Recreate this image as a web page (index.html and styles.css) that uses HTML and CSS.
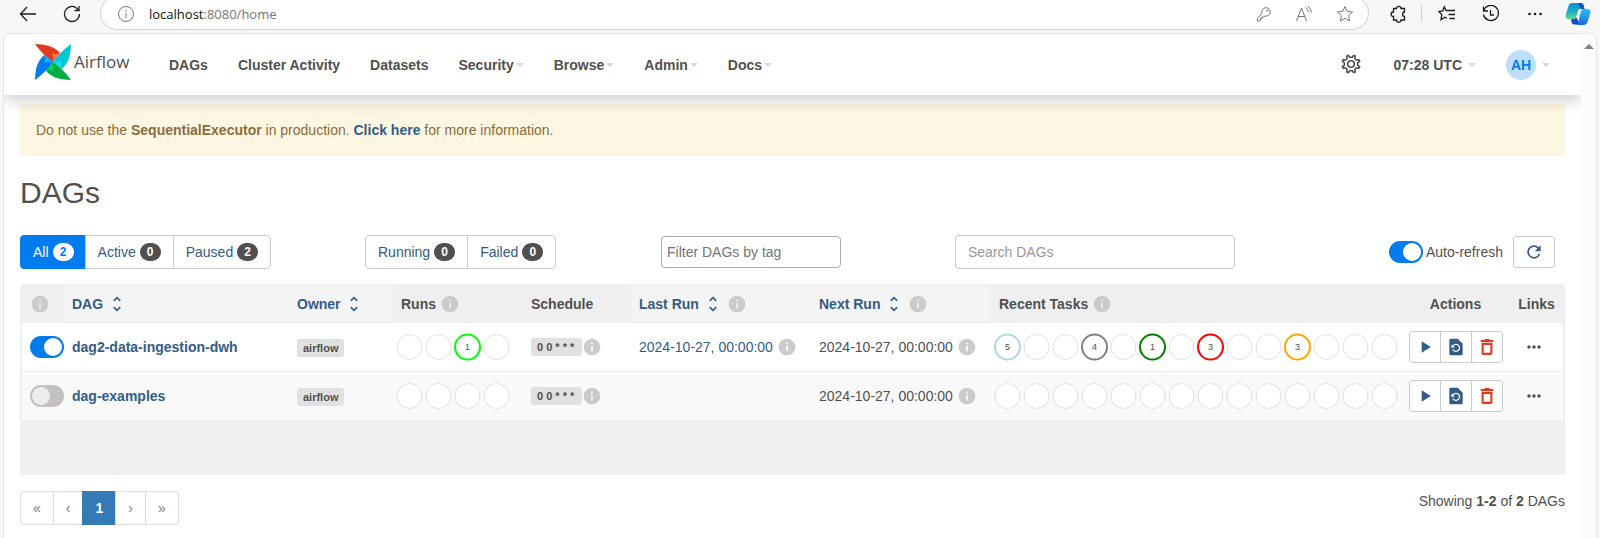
FILE: index.html
```html
<!DOCTYPE html>
<html lang="en">
<head>
<meta charset="utf-8">
<title>DAGs - Airflow</title>
<link rel="stylesheet" href="styles.css">
</head>
<body>
<svg class="defs" aria-hidden="true">
  <symbol id="i-info" viewBox="0 0 24 24"><path d="M12 2C6.48 2 2 6.48 2 12s4.48 10 10 10 10-4.48 10-10S17.52 2 12 2zm1 15h-2v-6h2v6zm0-8h-2V7h2v2z"/></symbol>
  <symbol id="i-sort" viewBox="0 0 24 24"><path d="M12 5.83L15.17 9l1.41-1.41L12 3 7.41 7.59 8.83 9 12 5.83zm0 12.34L8.83 15l-1.41 1.41L12 21l4.59-4.59L15.17 15 12 18.17z"/></symbol>
  <symbol id="i-play" viewBox="0 0 24 24"><path d="M8 5v14l11-7z"/></symbol>
  <symbol id="i-restore" viewBox="0 0 24 24"><path d="M14 2H6c-1.1 0-1.99.9-1.99 2L4 20c0 1.1.89 2 1.99 2H18c1.1 0 2-.9 2-2V8l-6-6zm-2 16c-2.05 0-3.81-1.24-4.58-3h1.71c.63.9 1.68 1.5 2.87 1.5 1.93 0 3.5-1.57 3.5-3.5S13.93 9.5 12 9.5c-1.35 0-2.52.78-3.1 1.9l1.6 1.6h-4V9l1.3 1.3C8.69 8.92 10.23 8 12 8c2.76 0 5 2.24 5 5s-2.24 5-5 5z"/></symbol>
  <symbol id="i-trash" viewBox="0 0 24 24"><path d="M5.500 19.500c0 1.100.9 2 2 2h9c1.100 0 2-.9 2-2V7h-13v12.500zM8 9.500h8V19H8V9.500zm7.500-6l-1-1h-5l-1 1H4.500V6h15V3.500h-4z"/></symbol>
  <symbol id="i-more" viewBox="0 0 24 24"><path d="M6 10c-1.1 0-2 .9-2 2s.9 2 2 2 2-.9 2-2-.9-2-2-2zm12 0c-1.1 0-2 .9-2 2s.9 2 2 2 2-.9 2-2-.9-2-2-2zm-6 0c-1.1 0-2 .9-2 2s.9 2 2 2 2-.9 2-2-.9-2-2-2z"/></symbol>
  <symbol id="i-refresh" viewBox="0 0 24 24"><path d="M17.65 6.35C16.2 4.9 14.21 4 12 4c-4.42 0-7.99 3.58-7.99 8s3.57 8 7.99 8c3.73 0 6.84-2.55 7.73-6h-2.08c-.82 2.33-3.04 4-5.65 4-3.31 0-6-2.69-6-6s2.69-6 6-6c1.66 0 3.14.69 4.22 1.78L13 11h7V4l-2.35 2.35z"/></symbol>
  <symbol id="blade" viewBox="0 0 36 36"><path d="M0 0C10 .5 17 1 25 9L18 18C11 13 7 9 0 0z"/></symbol>
  <symbol id="fold" viewBox="0 0 36 36"><path d="M17.500 8.500L20 10.500 25 9 18 18z"/></symbol>
</svg>

<div class="toolbar">
  <button class="tool back" aria-label="Back"><svg width="18" height="18" viewBox="0 0 18 18"><path d="M17 9H1.500M8 2L1.500 9 8 16"/></svg></button>
  <button class="tool reload" aria-label="Reload"><svg width="18" height="18" viewBox="0 0 18 18"><path d="M16.500 9A7.500 7.500 0 1 1 14 3.400L16 5.500M16 1v4.500h-4.500"/></svg></button>
  <div class="address">
    <svg width="18" height="18" viewBox="0 0 18 18"><circle cx="9" cy="9" r="7.500"/><path d="M9 8v5M9 5v1.500"/></svg>
    <span class="url"><b>localhost</b>:8080/home</span>
    <div class="address-tools">
      <svg width="16" height="16" viewBox="0 0 16 16"><path d="M6 7.200A4.200 4.200 0 1 1 9 10L7.500 11H6v1.600H4.500V14L3.800 15H1.500v-2.500z"/><circle cx="11.300" cy="4.700" r=".6"/></svg>
      <svg width="18" height="18" viewBox="0 0 18 18"><path d="M1.500 16L6.500 3l5 13M3.200 11.500h6.600M10.500 2.500q2.500 1.500 2.800 4.500M12.500 1q3.500 2 4 6.500"/></svg>
      <svg width="18" height="18" viewBox="0 0 18 18"><path d="M9 1.500l2.200 4.900 5.300.6-3.900 3.600 1 5.400L9 13.300 4.400 16l1-5.400L1.500 7l5.300-.6z"/></svg>
    </div>
  </div>
  <div class="browser-tools">
    <button class="tool" aria-label="Extensions"><svg width="18" height="18" viewBox="0 0 18 18"><path d="M4.500 3.500H7.500C7.500.6 12 .6 12 3.500H15.500V7C13 7 13 11.500 15.500 11.500V15H12C12 17.900 7.500 17.900 7.500 15H4.500V11.500C1.200 11.500 1.200 7 4.500 7z"/></svg></button>
    <span class="divider"></span>
    <button class="tool" aria-label="Favorites"><svg width="18" height="18" viewBox="0 0 18 18"><path d="M17 5.500h-5.500L8 5.500 6.300 1.800 4.700 5.800.8 6.500l3 3.200-.8 5 3.800-2.500 2 1M10.500 9.500H17M11.500 13.500H17"/></svg></button>
    <button class="tool" aria-label="History"><svg width="18" height="18" viewBox="0 0 18 18"><path d="M1.500 6A7.600 7.600 0 1 1 1.400 9.500M1.500 1.500V6H6M8.500 5v5H12"/></svg></button>
    <button class="tool" aria-label="More"><svg class="solid" width="18" height="18" viewBox="0 0 18 18"><circle cx="3.500" cy="9" r="1.300"/><circle cx="9" cy="9" r="1.300"/><circle cx="14.500" cy="9" r="1.300"/></svg></button>
    <button class="tool copilot" aria-label="Copilot"><svg width="26" height="24" viewBox="0 0 26 24">
      <defs>
        <linearGradient id="ga" x1="0" y1="0" x2="0" y2="1"><stop offset="0" stop-color="#0a8fd0"/><stop offset=".5" stop-color="#19a9c9"/><stop offset="1" stop-color="#5ddb8d"/></linearGradient>
        <linearGradient id="gb" x1="0" y1="0" x2="0" y2="1"><stop offset="0" stop-color="#2bc4f5"/><stop offset="1" stop-color="#1668e0"/></linearGradient>
      </defs>
      <path fill="url(#ga)" d="M7 1h9q2 0 2.500 2l1 4h-4q-2 0-2.500 2l-2 6q-.7 2-2.500 2H4Q-.5 17 1 12L3.500 4Q4.500 1 7 1z"/>
      <path fill="#1547c8" d="M6 17h3q1.500 0 2-2l4 7.500H9q-2 0-2.500-2.500z"/>
      <path fill="url(#gb)" d="M18 7h4q4.500 0 3 5l-2.500 8q-1 3-4 3h-7.500q1.500 0 2-2l3-12q.5-2 2-2z"/>
      <path fill="#0b57b5" d="M13 1h3q2 0 2.500 2l1 4h-3q-1.500 0-2-2z"/>
    </svg></button>
  </div>
</div>

<div class="window">
  <div class="page">
    <nav class="navbar">
      <a class="brand" href="#">
        <svg width="36" height="36" viewBox="0 0 36 36">
          <g fill="#e43921"><use href="#blade"/></g><g fill="#ff7557"><use href="#fold"/></g>
          <g transform="rotate(90 18 18)"><use href="#blade" fill="#00c7d4"/><use href="#fold" fill="#11e1ee"/></g>
          <g transform="rotate(180 18 18)"><use href="#blade" fill="#00ad46"/><use href="#fold" fill="#04d659"/></g>
          <g transform="rotate(270 18 18)"><use href="#blade" fill="#017cee"/><use href="#fold" fill="#0cb6ff"/></g>
        </svg>
        <span>Airflow</span>
      </a>
      <div class="menu">
        <a href="#">DAGs</a>
        <a href="#">Cluster Activity</a>
        <a href="#">Datasets</a>
        <a class="drop" href="#">Security</a>
        <a class="drop" href="#">Browse</a>
        <a class="drop" href="#">Admin</a>
        <a class="drop" href="#">Docs</a>
      </div>
      <div class="account">
        <a class="settings" href="#" aria-label="Settings"><svg class="gear" width="20" height="20" viewBox="0 0 20 20"><path d="M16.700 11.300L18.600 12.600 17.900 14.300 15.600 13.800 13.800 15.600 14.300 17.900 12.600 18.600 11.300 16.700H8.700L7.400 18.600 5.700 17.900 6.200 15.600 4.400 13.800 2.100 14.300 1.400 12.600 3.300 11.300V8.700L1.400 7.400 2.100 5.700 4.400 6.200 6.200 4.400 5.700 2.100 7.400 1.400 8.700 3.300H11.300L12.600 1.400 14.300 2.100 13.800 4.400 15.600 6.200 17.900 5.700 18.600 7.400 16.700 8.700z"/><circle cx="10" cy="10" r="3.300"/></svg></a>
        <a class="drop wide" href="#">07:28 UTC</a>
        <a class="drop wide" href="#"><span class="avatar">AH</span></a>
      </div>
    </nav>

    <main class="content">
      <div class="alert">Do not use the <b>SequentialExecutor</b> in production. <a href="#">Click here</a> for more information.</div>
      <h2>DAGs</h2>

      <div class="filters">
        <div class="group">
          <a class="btn active" href="#">All <span class="badge">2</span></a>
          <a class="btn" href="#">Active <span class="badge">0</span></a>
          <a class="btn" href="#">Paused <span class="badge">2</span></a>
        </div>
        <div class="group">
          <a class="btn" href="#">Running <span class="badge">0</span></a>
          <a class="btn" href="#">Failed <span class="badge">0</span></a>
        </div>
        <div><input class="tag-filter" type="text" placeholder="Filter DAGs by tag" aria-label="Filter DAGs by tag"></div>
        <div class="last">
          <input class="search" type="text" placeholder="Search DAGs" aria-label="Search DAGs">
          <div class="refresh">
            <label><input class="switch" type="checkbox" checked>Auto-refresh</label>
            <button class="reload-btn" aria-label="Refresh"><svg class="icon"><use href="#i-refresh"/></svg></button>
          </div>
        </div>
      </div>

      <div class="table-wrap">
        <table>
          <colgroup><col class="c-toggle"><col><col class="c-owner"><col class="c-runs"><col class="c-sched"><col class="c-date"><col class="c-date"><col class="c-tasks"><col class="c-actions"><col class="c-links"></colgroup>
          <thead>
            <tr>
              <th><svg class="icon info"><use href="#i-info"/></svg></th>
              <th class="sortable"><a href="#">DAG <svg class="icon"><use href="#i-sort"/></svg></a></th>
              <th class="sortable"><a href="#">Owner <svg class="icon"><use href="#i-sort"/></svg></a></th>
              <th>Runs <svg class="icon info"><use href="#i-info"/></svg></th>
              <th>Schedule</th>
              <th class="sortable"><a href="#">Last Run <svg class="icon"><use href="#i-sort"/></svg></a> <svg class="icon info"><use href="#i-info"/></svg></th>
              <th class="sortable"><a href="#">Next Run <svg class="icon"><use href="#i-sort"/></svg></a> <svg class="icon info"><use href="#i-info"/></svg></th>
              <th>Recent Tasks <svg class="icon info"><use href="#i-info"/></svg></th>
              <th class="center">Actions</th>
              <th class="center">Links</th>
            </tr>
          </thead>
          <tbody>
            <tr>
              <td><input class="switch" type="checkbox" checked aria-label="Unpause dag2-data-ingestion-dwh"></td>
              <td><a class="dag" href="#">dag2-data-ingestion-dwh</a></td>
              <td><a class="label" href="#">airflow</a></td>
              <td class="states"><svg width="114" height="28"><circle cx="13.500" cy="14" r="12.500"/><circle cx="42.500" cy="14" r="12.500"/><circle class="on" stroke="lime" cx="71.500" cy="14" r="12.500"/><circle cx="100.500" cy="14" r="12.500"/><text x="71.500" y="17">1</text></svg></td>
              <td><div class="inline"><a class="label cron" href="#">0 0 * * *</a><svg class="icon info"><use href="#i-info"/></svg></div></td>
              <td><div class="inline date"><a href="#">2024-10-27, 00:00:00</a><svg class="icon info"><use href="#i-info"/></svg></div></td>
              <td><div class="inline date"><span>2024-10-27, 00:00:00</span><svg class="icon info"><use href="#i-info"/></svg></div></td>
              <td class="states"><svg width="404" height="28"><circle class="on" stroke="lightblue" cx="13.500" cy="14" r="12.500"/><circle cx="42.500" cy="14" r="12.500"/><circle cx="71.500" cy="14" r="12.500"/><circle class="on" stroke="gray" cx="100.500" cy="14" r="12.500"/><circle cx="129.500" cy="14" r="12.500"/><circle class="on" stroke="green" cx="158.500" cy="14" r="12.500"/><circle cx="187.500" cy="14" r="12.500"/><circle class="on" stroke="red" cx="216.500" cy="14" r="12.500"/><circle cx="245.500" cy="14" r="12.500"/><circle cx="274.500" cy="14" r="12.500"/><circle class="on" stroke="orange" cx="303.500" cy="14" r="12.500"/><circle cx="332.500" cy="14" r="12.500"/><circle cx="361.500" cy="14" r="12.500"/><circle cx="390.500" cy="14" r="12.500"/><text x="13.500" y="17">5</text><text x="100.500" y="17">4</text><text x="158.500" y="17">1</text><text x="216.500" y="17">3</text><text x="303.500" y="17">3</text></svg></td>
              <td><div class="actions"><button aria-label="Trigger DAG"><svg class="icon"><use href="#i-play"/></svg></button><button aria-label="Reparse DAG"><svg class="icon"><use href="#i-restore"/></svg></button><button class="danger" aria-label="Delete DAG"><svg class="icon"><use href="#i-trash"/></svg></button></div></td>
              <td class="more"><a href="#" aria-label="Links"><svg class="icon"><use href="#i-more"/></svg></a></td>
            </tr>
            <tr>
              <td><input class="switch" type="checkbox" aria-label="Unpause dag-examples"></td>
              <td><a class="dag" href="#">dag-examples</a></td>
              <td><a class="label" href="#">airflow</a></td>
              <td class="states"><svg width="114" height="28"><circle cx="13.500" cy="14" r="12.500"/><circle cx="42.500" cy="14" r="12.500"/><circle cx="71.500" cy="14" r="12.500"/><circle cx="100.500" cy="14" r="12.500"/></svg></td>
              <td><div class="inline"><a class="label cron" href="#">0 0 * * *</a><svg class="icon info"><use href="#i-info"/></svg></div></td>
              <td></td>
              <td><div class="inline date"><span>2024-10-27, 00:00:00</span><svg class="icon info"><use href="#i-info"/></svg></div></td>
              <td class="states"><svg width="404" height="28"><circle cx="13.500" cy="14" r="12.500"/><circle cx="42.500" cy="14" r="12.500"/><circle cx="71.500" cy="14" r="12.500"/><circle cx="100.500" cy="14" r="12.500"/><circle cx="129.500" cy="14" r="12.500"/><circle cx="158.500" cy="14" r="12.500"/><circle cx="187.500" cy="14" r="12.500"/><circle cx="216.500" cy="14" r="12.500"/><circle cx="245.500" cy="14" r="12.500"/><circle cx="274.500" cy="14" r="12.500"/><circle cx="303.500" cy="14" r="12.500"/><circle cx="332.500" cy="14" r="12.500"/><circle cx="361.500" cy="14" r="12.500"/><circle cx="390.500" cy="14" r="12.500"/></svg></td>
              <td><div class="actions"><button aria-label="Trigger DAG"><svg class="icon"><use href="#i-play"/></svg></button><button aria-label="Reparse DAG"><svg class="icon"><use href="#i-restore"/></svg></button><button class="danger" aria-label="Delete DAG"><svg class="icon"><use href="#i-trash"/></svg></button></div></td>
              <td class="more"><a href="#" aria-label="Links"><svg class="icon"><use href="#i-more"/></svg></a></td>
            </tr>
          </tbody>
        </table>
      </div>

      <div class="footer">
        <div class="pages">
          <a href="#">«</a><a href="#">‹</a><a class="current" href="#">1</a><a href="#">›</a><a href="#">»</a>
        </div>
        <div>Showing <b>1-2</b> of <b>2</b> DAGs</div>
      </div>
    </main>
  </div>
  <div class="scrollbar"><span></span></div>
</div>
</body>
</html>
```
FILE: styles.css
```css
* { box-sizing: border-box; }
html, body { height: 100%; }
body {
  margin: 0;
  display: flex;
  flex-direction: column;
  overflow: hidden;
  background: #f7f7f7;
  color: #51504f;
  font: 14px/20px "Liberation Sans", Arial, sans-serif;
}
a { color: #335c85; text-decoration: none; }
button { font: inherit; padding: 0; cursor: pointer; }
svg { display: block; flex: none; }
.defs { position: absolute; width: 0; height: 0; }
.icon { width: 20px; height: 20px; fill: currentColor; }
.info { color: #cbcbcb; }

/* browser toolbar */
.toolbar {
  flex: none;
  display: flex;
  align-items: flex-start;
  height: 34px;
  padding: 0 9px 0 19px;
}
.toolbar svg { fill: none; stroke: #1b1b1b; stroke-width: 1.3; }
.toolbar svg.solid, .toolbar .copilot svg { fill: #1b1b1b; stroke: none; }
.tool { display: block; border: 0; background: none; padding-top: 5px; }
.reload { margin-left: 26px; }
.address {
  flex: 1;
  display: flex;
  align-items: center;
  height: 34px;
  margin: -4px 20px 0 19px;
  padding: 2px 14px 0 16px;
  border: 1px solid #cfd1cf;
  border-radius: 17px;
  background: #fff;
}
.address svg { stroke: #757575; stroke-width: 1; }
.url {
  margin-left: 14px;
  color: #767676;
  font: 13px/20px "Open Sans", "Noto Sans", sans-serif;
}
.url b { color: #111; font-weight: 400; }
.address-tools { display: flex; align-items: center; gap: 23px; margin-left: auto; }
.browser-tools { display: flex; align-items: flex-start; }
.browser-tools .tool + .tool { margin-left: 26px; }
.divider { width: 1px; height: 16px; margin: 6px 16px 0 14px; background: #cfcfcf; }
.browser-tools .copilot { padding-top: 2px; }
.browser-tools .tool + .copilot { margin-left: 21px; }

/* page frame */
.window {
  flex: 1;
  display: flex;
  min-height: 0;
  margin: 0 4px;
  overflow: hidden;
  background: #fff;
  border-radius: 8px 8px 0 0;
  box-shadow: 0 0 2px #bbb;
}
.page { flex: 1; min-width: 0; overflow: hidden; }
.scrollbar {
  width: 15px;
  background: #fcfcfc;
  padding-top: 10px;
}
.scrollbar span {
  display: block;
  width: 10px;
  margin: 0 auto;
  border: 5px solid transparent;
  border-top: 0;
  border-bottom-color: #848484;
}

/* navigation */
.navbar {
  position: relative;
  display: flex;
  align-items: center;
  height: 61px;
  padding: 0 31px;
  background: #fff;
  box-shadow: 0 5px 15px rgba(0, 0, 0, .2);
}
.navbar a { color: #51504f; font-weight: 700; }
.navbar .brand {
  display: flex;
  align-items: center;
  gap: 3px;
  width: 134px;
  padding-bottom: 5px;
  font: 17px/24px "Open Sans", "Noto Sans", sans-serif;
}
.menu { display: flex; gap: 30px; }
.drop { display: flex; align-items: center; gap: 2px; }
.drop::after {
  content: "";
  border: 4px solid transparent;
  border-top-color: #e2d2e4;
  border-bottom: 0;
}
.drop.wide { gap: 6px; }
.account { display: flex; align-items: center; gap: 30px; margin-left: auto; }
.settings { margin-right: 3px; padding-bottom: 2px; }
.gear { fill: none; stroke: #51504f; stroke-width: 1.6; }
.avatar {
  width: 30px;
  height: 30px;
  border-radius: 50%;
  background: #bfdefb;
  color: #017cee;
  line-height: 30px;
  text-align: center;
}

/* content */
.content { padding: 9px 16px 12px; }
.alert {
  padding: 16px;
  border-radius: 4px;
  background: #fdf6e3;
  color: #8a6d3b;
}
.alert a { font-weight: 700; }
h2 { margin: 19px 0 24px; font-size: 30px; line-height: 36px; font-weight: 400; }
.filters {
  display: grid;
  grid-template-columns: 345fr 296fr 294fr 610fr;
  align-items: center;
}
.group { display: flex; }
.btn {
  display: flex;
  align-items: center;
  gap: 4px;
  height: 34px;
  padding: 0 12px;
  border: 1px solid #ccc;
  margin-left: -1px;
  background: #fff;
}
.btn:first-child { margin-left: 0; border-radius: 4px 0 0 4px; }
.btn:last-child { border-radius: 0 4px 4px 0; }
.badge {
  width: 21px;
  border-radius: 9px;
  background: #51504f;
  color: #fff;
  font-size: 12px;
  line-height: 18px;
  font-weight: 700;
  text-align: center;
}
.btn.active { padding-right: 11px; border-color: #017cee; background: #017cee; color: #fff; }
.active .badge { background: #fff; color: #017cee; }
.filters input[type="text"] { font: inherit; border-radius: 4px; background: #fff; }
.filters ::placeholder { opacity: 1; color: #757575; }
.filters .search::placeholder { color: #999; }
.tag-filter { display: block; width: 180px; height: 32px; padding: 0 5px; border: 1px solid #aaa; }
.last { display: flex; align-items: center; justify-content: space-between; }
.search { width: 280px; height: 34px; padding: 0 12px; border: 1px solid #ccc; }
.refresh { display: flex; align-items: center; gap: 10px; padding-right: 10px; }
.refresh label { display: flex; align-items: center; gap: 3px; }
.reload-btn {
  display: grid;
  place-items: center;
  width: 42px;
  height: 32px;
  border: 1px solid #ccc;
  border-radius: 3px;
  background: #fff;
  color: #335c85;
}
.switch {
  appearance: none;
  display: block;
  flex: none;
  width: 34px;
  height: 22px;
  margin: 0;
  padding: 2px;
  border-radius: 11px;
  background: #c4c2c1;
}
.switch::before {
  content: "";
  display: block;
  width: 18px;
  height: 18px;
  border-radius: 50%;
  background: #edecec;
}
.switch:checked { background: #017cee; }
.switch:checked::before { margin-left: 12px; background: #fff; }

/* DAG table */
.table-wrap {
  margin-top: 15px;
  padding: 0 2px 54px;
  border-radius: 4px 4px 0 0;
  background: #efefef;
}
table { width: 100%; table-layout: fixed; border-collapse: collapse; }
.c-toggle { width: 42px; }
.c-owner { width: 104px; }
.c-runs { width: 130px; }
.c-sched { width: 108px; }
.c-date { width: 180px; }
.c-tasks { width: 410px; }
.c-actions { width: 109px; }
.c-links { width: 53px; }
th { height: 38px; padding: 0 8px; text-align: left; white-space: nowrap; border: 0 solid #efefef; border-width: 1px 0; }
th .icon { display: inline-block; vertical-align: -5px; }
th.sortable { background: #f4f4f4; }
.center { text-align: center; }
td { height: 49px; padding: 0 8px; border-bottom: 1px solid #efefef; background: #fff; white-space: nowrap; }
tbody tr:nth-child(even) td { background: #f9f9f9; }
.dag { font-weight: 700; }
.label {
  display: inline-block;
  padding: 0 6px;
  border-radius: 3px;
  background: #e1e1e1;
  color: #51504f;
  font-size: 11px;
  line-height: 18px;
  font-weight: 700;
}
.label.cron { padding-right: 8px; }
.inline { display: flex; align-items: center; }
.inline.date { gap: 4px; }
td.states { padding: 0 3px; }
.states circle { fill: #fff; stroke: #e0e0e0; stroke-width: 1; }
.states circle.on { stroke-width: 2; }
.states circle.on[stroke="lime"] { stroke: lime; }
.states circle.on[stroke="lightblue"] { stroke: lightblue; }
.states circle.on[stroke="gray"] { stroke: gray; }
.states circle.on[stroke="green"] { stroke: green; }
.states circle.on[stroke="red"] { stroke: red; }
.states circle.on[stroke="orange"] { stroke: orange; }
.states text { font-size: 9px; fill: #51504f; text-anchor: middle; }
.actions { display: flex; }
.actions button {
  display: grid;
  place-items: center;
  width: 32px;
  height: 32px;
  margin-right: -1px;
  border: 1px solid #ccc;
  background: #fff;
  color: #335c85;
}
.actions button:first-child { border-radius: 3px 0 0 3px; }
.actions button:last-child { border-radius: 0 3px 3px 0; }
.actions .danger { color: #e43921; }
td.more { padding: 0 10px 0 4px; }
.more a { display: grid; place-items: center; color: #51504f; }

/* pagination */
.footer { display: flex; justify-content: space-between; margin-top: 16px; }
.pages { display: flex; }
.pages a {
  padding: 6px 12px;
  margin-left: -1px;
  border: 1px solid #ddd;
  color: #777;
}
.pages a:first-child { margin-left: 0; border-radius: 4px 0 0 4px; }
.pages a:last-child { border-radius: 0 4px 4px 0; }
.pages .current { border-color: #337ab7; background: #337ab7; color: #fff; font-weight: 700; }
```
